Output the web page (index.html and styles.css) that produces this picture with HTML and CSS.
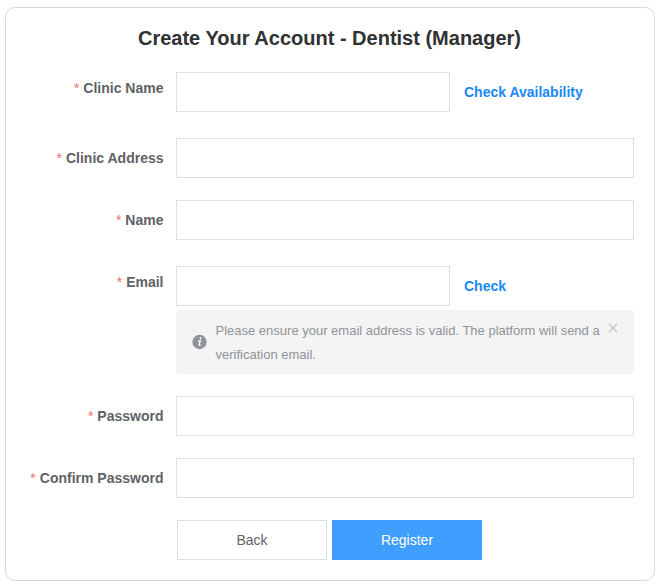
FILE: index.html
```html
<!DOCTYPE html>
<html lang="en">
<head>
<meta charset="utf-8">
<title>Create Your Account</title>
<link rel="stylesheet" href="styles.css">
</head>
<body>
<main class="card">
  <h1 class="title">Create Your Account - Dentist (Manager)</h1>
  <form class="form">
    <div class="row row-action">
      <label class="label" for="clinic">Clinic Name</label>
      <div class="control"><input class="input short" id="clinic"><a class="link">Check Availability</a></div>
    </div>
    <div class="row">
      <label class="label" for="address">Clinic Address</label>
      <div class="control"><input class="input" id="address"></div>
    </div>
    <div class="row">
      <label class="label" for="name">Name</label>
      <div class="control"><input class="input" id="name"></div>
    </div>
    <div class="row row-email">
      <label class="label" for="email">Email</label>
      <div class="control"><input class="input short" id="email"><a class="link">Check</a></div>
      <div class="alert">
        <svg class="info" viewBox="0 0 16 16"><circle cx="7.5" cy="8" r="7.2" fill="#909399"/><circle cx="8.6" cy="4.3" r="1" fill="#fff"/><path d="M6 7.3 8.3 6.7 7.1 10.8Q7 11.7 8.7 10.7" fill="none" stroke="#fff" stroke-width="1.3"/></svg>
        <p class="message">Please ensure your email address is valid. The platform will send a verification email.</p>
        <svg class="close" viewBox="0 0 10 10"><path d="M1 1 9 9M9 1 1 9" stroke="#c0c4cc" stroke-width="1.1" fill="none"/></svg>
      </div>
    </div>
    <div class="row">
      <label class="label" for="password">Password</label>
      <div class="control"><input class="input" id="password" type="password"></div>
    </div>
    <div class="row">
      <label class="label" for="confirm">Confirm Password</label>
      <div class="control"><input class="input" id="confirm" type="password"></div>
    </div>
    <div class="buttons">
      <button class="button" type="button">Back</button>
      <button class="button primary" type="button">Register</button>
    </div>
  </form>
</main>
</body>
</html>
```

FILE: styles.css
```css
* { box-sizing: border-box; }
body {
  margin: 0;
  padding: 7px 6px 5px 5px;
  background: #fff;
  font-family: "Liberation Sans", Arial, sans-serif;
  font-size: 14px;
  color: #606266;
}
.card {
  height: 574px;
  padding: 18px 20px 0 14px;
  border: 1px solid #d9d9d9;
  border-radius: 10px;
}
.title {
  margin: 0 0 22px;
  padding-left: 5px;
  line-height: 24px;
  font-size: 20px;
  text-align: center;
  color: #303133;
}
.row {
  display: grid;
  grid-template-columns: 156px 458px;
  margin-bottom: 22px;
}
.row-action { margin-bottom: 26px; }
.row-email { margin-top: 26px; }
.label {
  padding-right: 12.5px;
  line-height: 40px;
  font-weight: bold;
  text-align: right;
}
.label::before {
  content: "*";
  margin-right: 4px;
  font-weight: normal;
  color: #f56c6c;
}
.row-action .label, .row-email .label { line-height: 32px; }
.control { display: flex; height: 40px; }
.input {
  width: 100%;
  height: 40px;
  padding: 0 15px;
  border: 1px solid #dcdfe6;
  border-radius: 0;
  outline: none;
}
.short { width: 274px; }
.link {
  margin-left: 14px;
  line-height: 40px;
  font-weight: bold;
  color: #1989fa;
}
.alert {
  grid-column: 2;
  display: flex;
  align-items: center;
  height: 64px;
  margin-top: 4px;
  padding: 0 16px;
  border-radius: 4px;
  background: #f4f4f4;
  color: #909399;
}
.info { width: 16px; height: 16px; flex: none; }
.message {
  width: 390px;
  margin: 0 0 0 7.5px;
  padding-top: 2px;
  font-size: 13px;
  line-height: 24px;
}
.close {
  align-self: flex-start;
  width: 10px;
  height: 10px;
  margin: 13px 0 0 2px;
  flex: none;
}
.buttons { display: flex; gap: 5px; margin-left: 157px; }
.button {
  width: 150px;
  height: 40px;
  border: 1px solid #dcdfe6;
  background: #fff;
  font: 14px "Liberation Sans", Arial, sans-serif;
  color: #606266;
}
.primary { border-color: #409eff; background: #409eff; color: #fff; }
```
